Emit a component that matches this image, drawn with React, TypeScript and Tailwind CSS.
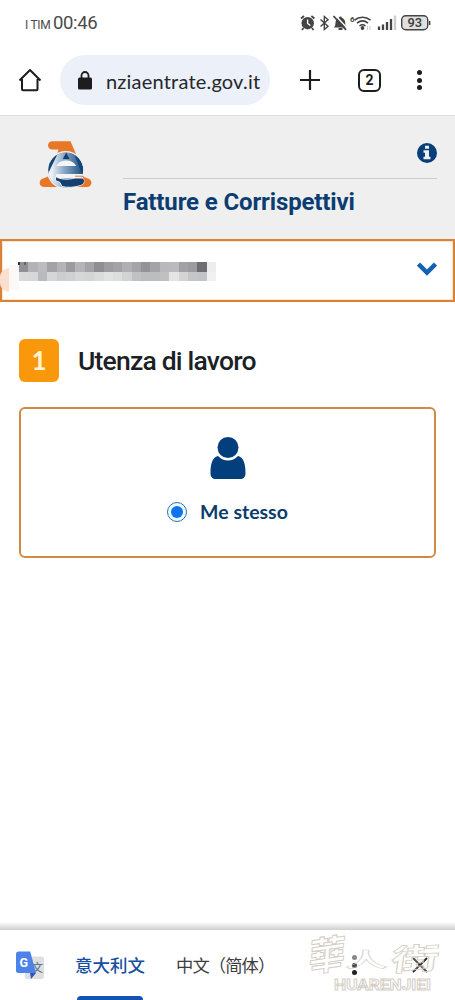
import React from "react";

const topCells = [
  "#8f9095", "#b2b3b6", "#bcbcbf", "#a3a3a7", "#b4b4b8", "#9b9ba0", "#b5b5b8",
  "#a4a4a8", "#8e8e93", "#9d9da1", "#a3a3a7", "#b0b0b3", "#a5a5a9", "#939398",
  "#a4a4a8", "#b9b9bc", "#bbbbbd", "#a2a2a6", "#9b9ba0", "#6d6d73", "#ededee",
];

const bottomCells = [
  "#d8d9da", "#d6d7d8", "#b9babd", "#d5d6d7", "#cccdcf", "#cfd0d2", "#d6d7d8",
  "#d3d4d5", "#dadbdb", "#e1e2e2", "#dcdddd", "#d2d3d4", "#c0c1c3", "#bcbdbf",
  "#bcbdbf", "#bfc0c2", "#e4e5e4", "#d3d4d5", "#c5c6c8", "#c3c4c7", "#f1f1f1",
];

const StatusBar: React.FC = () => (
  <div className="flex h-[45px] items-center justify-between pt-px pl-[25px] pr-[24px] text-[#4a4a4a]">
    <div className="flex items-baseline gap-[3px] pt-px">
      <span className="w-[25px] whitespace-nowrap text-[12px] tracking-[-0.3px]">I TIM</span>
      <span className="whitespace-nowrap text-[18.5px] tracking-[-0.35px]">00:46</span>
    </div>
    <svg width="131" height="18" viewBox="0 0 131 18" fill="none" stroke="#444">
      {/* alarm */}
      <circle cx="7.7" cy="9.2" r="6.2" fill="#444" stroke="none" />
      <path d="M1 4.5 4 2M14.4 4.5 11.4 2M3.5 14 2 16M12 14l1.5 2" strokeWidth="1.8" />
      <path d="M7.6 5.5v4l2.8 2" stroke="#fff" strokeWidth="1.3" />
      {/* bluetooth */}
      <path d="M20.5 5.5 28 12.3 24.3 15.5V2.5L28 5.7 20.5 12.5" strokeWidth="1.4" />
      {/* muted bell */}
      <path d="M34 13.5c1.5-1.5 1.2-3 1.5-5 .3-3 1.5-4.2 3.5-4.8C39.5 2 41.5 2 41.8 3.7c2 .6 3.2 2.300 3.400 4.800.2 2 0 3.500 1.600 5z" fill="#444" stroke="none" />
      <path d="M38.5 15h4" strokeWidth="2" />
      <path d="M35 1 47.5 14.5" stroke="#fff" strokeWidth="1.4" />
      <path d="M33.5 2 46 15.8" strokeWidth="1.8" />
      {/* wifi */}
      <text x="50" y="8" fill="#444" stroke="none" fontSize="8" fontWeight="700">6</text>
      <path d="M54.5 6.2c4.8-4 11.3-4 16 0M57 9.2c3.4-2.8 7.6-2.8 11 0M59.5 12c2-1.600 4-1.600 6 0" strokeWidth="1.6" />
      <circle cx="62.5" cy="14" r="1.9" fill="#444" stroke="none" />
      <path d="M67.5 12v4M70 12v4" stroke="#ccc" />
      {/* signal */}
      <path d="M79 12.5V16M83 10.5V16M87 8v8M91 5v11" strokeWidth="2.3" />
      <path d="M95 1.5V16" stroke="#ccc" strokeWidth="2.4" />
      {/* battery */}
      <rect x="101.7" y="1.7" width="26" height="14" rx="4" fill="#e0e0e0" strokeWidth="1.4" />
      <path d="M129.6 7v4" strokeWidth="1.5" />
      <text x="114.7" y="13.4" textAnchor="middle" fill="#444" stroke="none" fontSize="12.8" fontWeight="600">93</text>
    </svg>
  </div>
);

const BrowserBar: React.FC = () => (
  <div className="flex h-[70px] items-center pl-[18px]">
    <svg width="24" height="24" viewBox="0 0 24 24" fill="none" stroke="#1d1d1f" strokeWidth="2">
      <path d="M1.5 12.5 12 2l10.500 10.500M4 11v10.300q0 1 1 1h13.500q1 0 1-1V11" strokeLinejoin="round" />
    </svg>
    <div className="ml-[18px] flex h-[50px] w-[210px] items-center rounded-full bg-[#ebf0f9] pl-[18px]">
      <svg width="14" height="19" viewBox="0 0 14 19" fill="none">
        <rect y="6.5" width="14" height="12" rx="1.5" fill="#1d1d1f" />
        <path d="M3.5 7V4.5a3.5 3.5 0 0 1 7 0V7" stroke="#1d1d1f" strokeWidth="1.8" />
      </svg>
      <span className="ml-[14px] whitespace-nowrap pt-px font-['Lato',sans-serif] text-[20px] tracking-[0.2px] text-[#26282b]">
        nziaentrate.gov.it
      </span>
    </div>
    <svg className="ml-[30px]" width="20" height="20" viewBox="0 0 20 20" stroke="#1d1d1f" strokeWidth="2.2">
      <path d="M10 0v20M0 10h20" />
    </svg>
    <div className="ml-[38px] flex h-[23px] w-[23px] items-center justify-center rounded-[6px] border-2 border-[#1d1d1f] text-[14px] font-bold text-[#1d1d1f]">
      2
    </div>
    <div className="ml-[36px] flex flex-col gap-[2.5px]">
      <span className="size-[5px] rounded-full bg-[#1d1d1f]" />
      <span className="size-[5px] rounded-full bg-[#1d1d1f]" />
      <span className="size-[5px] rounded-full bg-[#1d1d1f]" />
    </div>
  </div>
);

const Logo: React.FC = () => (
  <svg width="54" height="48" viewBox="0 0 54 48">
    <defs>
      <linearGradient id="sphere" x1="0" x2="1">
        <stop offset="0.15" stopColor="#eef2f7" />
        <stop offset="0.5" stopColor="#8ba8c6" />
        <stop offset="1" stopColor="#1f5388" />
      </linearGradient>
      <clipPath id="sphereClip">
        <circle cx="26.7" cy="30" r="17.6" />
      </clipPath>
    </defs>
    <path d="M13.5 1.2h18L37 14H18l1.5-4.5h-6c-6 0-6-8.300 0-8.300z" fill="#e87728" />
    <path d="M5.5 38 10 36h33l4.500 2c7 1 6 9 .5 9H5.5c-6.500 0-6.500-8 0-9z" fill="#e87728" />
    <circle cx="26.7" cy="30" r="19" fill="#efefef" />
    <g clipPath="url(#sphereClip)">
      <circle cx="26.7" cy="30" r="17.6" fill="#164577" />
      <path d="M20 11h14l9 23v14H7V38z" fill="url(#sphere)" />
      <path d="m27.200 12.500 3.300 6.500h-6.600z" fill="#123e70" />
      <path d="M17.500 26c2.500-7.500 17-7.500 19.500 0z" fill="#f4f5f7" />
      <path d="M17 34h30v4H17z" fill="#f3f4f5" />
    </g>
    <path
      d="M16.500 36.500c4.500 3 12.500 3.500 19.500 1.500h6c5 0 4.500 6-.500 7.500-6 2-13 2.300-18.500 1L21 42.500l-4.500-2z"
      fill="#153f70"
      stroke="#f4f5f7"
      strokeWidth="0.9"
    />
    <path d="M36 36.200h7c3.500 1 4 6 1.500 8.700" fill="none" stroke="#e87728" strokeWidth="1" />
  </svg>
);

const SiteHeader: React.FC = () => (
  <header className="flex h-[124px] border-t border-[#dedede] bg-[#efefef] pl-[39px] pr-[18px]">
    <div className="pt-[24px]">
      <Logo />
    </div>
    <div className="ml-[30px] flex-1">
      <div className="flex h-[63px] justify-end border-b border-[#c9c9c9] pt-[27px]">
        <svg width="20" height="20" viewBox="0 0 20 20">
          <circle cx="10" cy="10" r="10" fill="#063f7c" />
          <path d="M8 2.7h4v3H8zM6.500 7.300H12v6.400h1.500v2.500h-7v-2.500H8V9.800H6.500z" fill="#efefef" />
        </svg>
      </div>
      <h1 className="mt-[7px] whitespace-nowrap text-[24px] leading-[32px] font-bold tracking-[-0.13px] text-[#0b3d72]">
        Fatture e Corrispettivi
      </h1>
    </div>
  </header>
);

const UserSelect: React.FC = () => (
  <div className="relative flex h-[63px] items-center justify-between border-2 border-[#d98138] pt-[2px] pl-[17px] pr-[16px] shadow-[inset_0_0_1px_1px_#fbe3c8]">
    <span className="absolute left-[-2px] top-[27px] h-[24px] w-[9px] rounded-l-full bg-[#fbdfcf]" />
    <span className="absolute left-[7px] top-[24px] h-[25px] w-[10px] bg-[#fbf8f7]" />
    <span className="absolute left-[16px] top-[21px] h-[3px] w-[2px] bg-[#333]" />
    <span className="absolute left-[22px] top-[21px] h-[3px] w-[2px] bg-[#666]" />
    <div>
      {[topCells, bottomCells].map((row, i) => (
        <div key={i} className="flex">
          {row.map((color, j) => (
            <span key={j} className="h-[9.5px] w-[9.4px]" style={{ backgroundColor: color }} />
          ))}
        </div>
      ))}
    </div>
    <svg className="-mt-[6px]" width="20" height="14" viewBox="0 0 20 14" fill="none" stroke="#1262b3" strokeWidth="4.5">
      <path d="m1.5 2 8.500 8.500L18.500 2" />
    </svg>
  </div>
);

const WorkArea: React.FC = () => (
  <main className="flex-1 px-[19px] pt-[37px]">
    <div className="flex items-center gap-[19px]">
      <div className="flex h-[43px] w-[40px] items-center justify-center rounded-[6px] bg-[#fa980c] font-['Lato',sans-serif] text-[26px] font-bold text-[#fff4d2]">
        1
      </div>
      <h2 className="whitespace-nowrap text-[26.5px] font-medium tracking-[-0.8px] text-[#1b1f26]">
        Utenza di lavoro
      </h2>
    </div>
    <div className="mt-[25px] flex h-[151px] w-[417px] flex-col items-center rounded-[6px] border-2 border-[#d08a44] pt-[27px]">
      <svg width="36" height="44" viewBox="0 0 36 44" fill="#043f7d">
        <path d="M8 20c5.500 6 14.500 6 20 0 6 1 7.500 9 7.500 17 0 4-2 6-5.500 6H6c-3.500 0-5.500-2-5.500-6C.5 29 2 21 8 20z" />
        <circle cx="18" cy="11.5" r="11.7" fill="#fff" />
        <circle cx="18" cy="11.5" r="10.5" />
      </svg>
      <label className="mt-[19px] flex items-center gap-[13px] text-[#0b3d6b]">
        <span className="flex size-[20px] items-center justify-center rounded-full border border-[#2277b5] bg-[#f2fcff]">
          <span className="size-[12px] rounded-full bg-[#0b74ee]" />
        </span>
        <span className="whitespace-nowrap font-['Lato',sans-serif] text-[19.5px] leading-[26px] font-bold">Me stesso</span>
      </label>
    </div>
  </main>
);

const Watermark: React.FC = () => (
  <svg
    className="pointer-events-none absolute left-[300px] top-0 overflow-visible"
    width="150"
    height="70"
    viewBox="0 0 150 70"
    fill="#fff"
    fillOpacity="0.2"
    stroke="#d5cec5"
    strokeWidth="0.9"
  >
    <g fontFamily="'Noto Sans CJK TC', sans-serif" fontWeight="700">
      <text fontSize="35" transform="translate(8 42) rotate(-8) skewX(-12) scale(1.05 1.1)">華</text>
      <text fontSize="37" transform="translate(45 37) scale(1.15 .55)">人</text>
      <text fontSize="37" transform="translate(90 41) rotate(-3) skewX(-10) scale(1.3 .8)">街</text>
    </g>
    <text x="34" y="60" fontSize="15" fontWeight="700" fontFamily="Roboto" textLength="97" lengthAdjust="spacingAndGlyphs">
      HUARENJIEI
    </text>
  </svg>
);

const TranslateBar: React.FC = () => (
  <>
    <div className="h-[8px] bg-linear-to-b from-white to-[#cfcfcf]" />
    <footer className="relative flex h-[70px] items-center bg-white pl-[16px] font-['Noto_Sans_CJK_SC',sans-serif]">
      <svg width="28" height="29" viewBox="0 0 28 29">
        <rect x="9" y="5.5" width="19" height="22.5" rx="2" fill="#dedfe1" />
        <text x="15.5" y="20.5" fontSize="11.5" fontWeight="500" fill="#68798b">文</text>
        <path d="M14 22h6l-5 6z" fill="#3156b8" />
        <path d="M2.5.5h11.700L20 22H2.500c-1.500 0-2.500-1-2.500-2.300V3C0 1.500 1 .5 2.500.5z" fill="#4c83e8" />
        <text x="3.5" y="16" fontSize="12.5" fontWeight="700" fill="#fff" fontFamily="Roboto">G</text>
      </svg>
      <div className="ml-[31px] flex h-full flex-col items-center justify-between">
        <span className="mt-[22px] whitespace-nowrap text-[17.5px] leading-[26px] font-medium text-[#174fa3]">意大利文</span>
        <span className="h-[4px] w-[66px] rounded-t-[4px] bg-[#1253b5]" />
      </div>
      <span className="ml-[31px] whitespace-nowrap text-[17.3px] leading-[26px] tracking-[-0.9px] text-[#3c3d40]">
        中文（简体）
      </span>
      <div className="absolute left-[352px] top-[25px] flex flex-col gap-[2.5px]">
        <span className="size-[5px] rounded-full bg-[#888]" />
        <span className="size-[5px] rounded-full bg-[#222]" />
        <span className="size-[5px] rounded-full bg-[#222]" />
      </div>
      <svg className="absolute left-[412px] top-[27px]" width="16" height="16" viewBox="0 0 16 16" stroke="#2b2b2b" strokeWidth="2">
        <path d="m1 1 14 14M15 1 1 15" />
      </svg>
      <Watermark />
    </footer>
  </>
);

const App: React.FC = () => (
  <div className="flex h-[1000px] w-[455px] flex-col overflow-hidden bg-white font-['Roboto',sans-serif]">
    <StatusBar />
    <BrowserBar />
    <SiteHeader />
    <UserSelect />
    <WorkArea />
    <TranslateBar />
  </div>
);

export default App;
